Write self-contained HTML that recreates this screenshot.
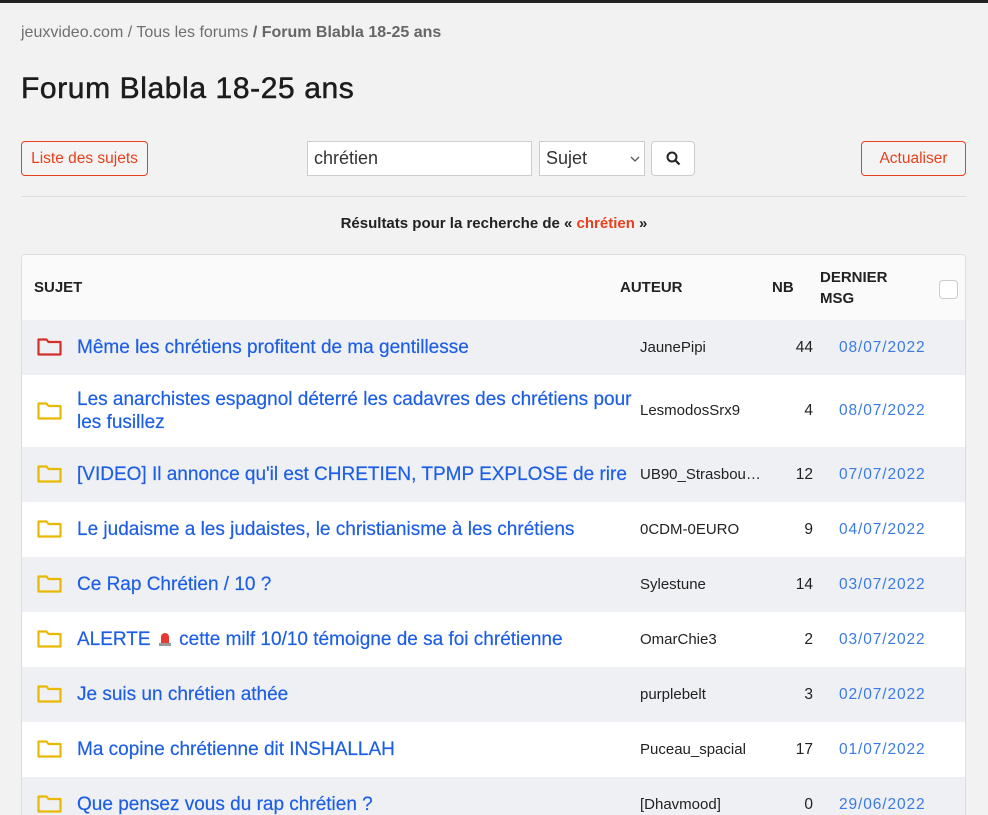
<!DOCTYPE html>
<html><head><meta charset="utf-8"><style>
*{box-sizing:border-box;margin:0;padding:0}
html,body{width:988px;height:815px;overflow:hidden}
body{background:#f2f2f2;font-family:"Liberation Sans",sans-serif;color:#222;position:relative}
.bar{position:absolute;left:0;top:0;width:988px;height:3px;background:#222}
.abs{position:absolute}
.bc{left:21px;top:24px;font-size:16px;color:#6f6f6f}
.bc b{color:#666}
h1{position:absolute;left:21px;top:72px;font-size:30px;font-weight:normal;color:#1c1c1c;letter-spacing:0.6px;-webkit-text-stroke:0.5px #1c1c1c}
.btn{position:absolute;border:1px solid #e8401c;border-radius:4px;color:#e8401c;background:#f4f4f4;font-size:15.5px;text-align:center;line-height:33px;height:35px}
.inp{position:absolute;background:#fff;border:1px solid #ccc;height:35px;font-size:18px;line-height:33px;padding-left:6px;color:#333}
.hr{left:21px;top:196px;width:945px;height:1px;background:#ddd}
.res{left:0;width:988px;top:215px;text-align:center;font-size:15px;font-weight:bold;color:#222}
.res span{color:#e8401c}
.tbl{position:absolute;left:21px;top:254px;width:945px;height:600px;border:1px solid #ddd;border-radius:4px;background:#fff;overflow:hidden}
.hd{position:absolute;left:0;top:0;width:945px;height:65px;background:#fafafa;font-weight:bold;font-size:15px;color:#222}
.row{position:absolute;left:0;width:945px}
.row.g{background:#eef0f4}
.t{position:absolute;left:55px;font-size:19px;color:#1d5ee6;line-height:23px;width:560px;-webkit-text-stroke:0.2px #1d5ee6}
.a{position:absolute;left:618px;font-size:15px;color:#222}
.n{position:absolute;right:154px;font-size:15.5px;color:#222;text-align:right}
.d{position:absolute;left:817px;font-size:15.5px;color:#3a7ae6;letter-spacing:0.9px}
.f{position:absolute;left:15px;width:25px;height:18px}
</style></head><body>
<div class="bar"></div>
<div class="abs bc">jeuxvideo.com / Tous les forums <b>/ Forum Blabla 18-25 ans</b></div>
<h1>Forum Blabla 18-25 ans</h1>
<div class="btn" style="left:21px;top:141px;width:127px">Liste des sujets</div>
<div class="inp" style="left:307px;top:141px;width:225px">chrétien</div>
<div class="inp" style="left:539px;top:141px;width:106px;border-color:#ccc">Sujet<svg style="position:absolute;right:4px;top:14px" width="10" height="6"><path d="M1 1l4 4 4-4" stroke="#555" fill="none" stroke-width="1.3"/></svg></div>
<div class="inp" style="left:651px;top:141px;width:44px;border-radius:4px"><svg style="position:absolute;left:14px;top:9px" width="15" height="15"><circle cx="6" cy="6" r="4.5" stroke="#222" stroke-width="2" fill="none"/><path d="M9.5 9.5l4 4" stroke="#222" stroke-width="2.2"/></svg></div>
<div class="btn" style="left:861px;top:141px;width:105px">Actualiser</div>
<div class="abs hr"></div>
<div class="abs res">Résultats pour la recherche de « <span>chrétien</span> »</div>
<div class="tbl">
<div class="hd">
<div class="abs" style="left:12px;top:24px">SUJET</div>
<div class="abs" style="left:598px;top:24px">AUTEUR</div>
<div class="abs" style="left:750px;top:24px">NB</div>
<div class="abs" style="left:798px;top:12px;line-height:21px">DERNIER<br>MSG</div>
<div class="abs" style="left:917px;top:25px;width:19px;height:19px;border:1px solid #ccc;border-radius:4px;background:#fff"></div>
</div>
<div class="row g" style="top:65px;height:55px"><svg class="f" style="top:18px" viewBox="0 0 25 18"><path d="M1.5 1.5h8l2 2.5h12v12.5h-22z" fill="none" stroke="#d3302a" stroke-width="2.2" stroke-linejoin="round"/></svg><div class="t" style="top:16px">Même les chrétiens profitent de ma gentillesse</div><div class="a" style="top:19px">JaunePipi</div><div class="n" style="top:19px">44</div><div class="d" style="top:19px">08/07/2022</div></div>
<div class="row" style="top:120px;height:72px"><svg class="f" style="top:27px" viewBox="0 0 25 18"><path d="M1.5 1.5h8l2 2.5h12v12.5h-22z" fill="none" stroke="#e9b800" stroke-width="2.2" stroke-linejoin="round"/></svg><div class="t" style="top:13px">Les anarchistes espagnol déterré les cadavres des chrétiens pour les fusillez</div><div class="a" style="top:27px">LesmodosSrx9</div><div class="n" style="top:27px">4</div><div class="d" style="top:27px">08/07/2022</div></div>
<div class="row g" style="top:192px;height:55px"><svg class="f" style="top:18px" viewBox="0 0 25 18"><path d="M1.5 1.5h8l2 2.5h12v12.5h-22z" fill="none" stroke="#e9b800" stroke-width="2.2" stroke-linejoin="round"/></svg><div class="t" style="top:16px">[VIDEO] Il annonce qu'il est CHRETIEN, TPMP EXPLOSE de rire</div><div class="a" style="top:19px">UB90_Strasbou…</div><div class="n" style="top:19px">12</div><div class="d" style="top:19px">07/07/2022</div></div>
<div class="row" style="top:247px;height:55px"><svg class="f" style="top:18px" viewBox="0 0 25 18"><path d="M1.5 1.5h8l2 2.5h12v12.5h-22z" fill="none" stroke="#e9b800" stroke-width="2.2" stroke-linejoin="round"/></svg><div class="t" style="top:16px">Le judaisme a les judaistes, le christianisme à les chrétiens</div><div class="a" style="top:19px">0CDM-0EURO</div><div class="n" style="top:19px">9</div><div class="d" style="top:19px">04/07/2022</div></div>
<div class="row g" style="top:302px;height:55px"><svg class="f" style="top:18px" viewBox="0 0 25 18"><path d="M1.5 1.5h8l2 2.5h12v12.5h-22z" fill="none" stroke="#e9b800" stroke-width="2.2" stroke-linejoin="round"/></svg><div class="t" style="top:16px">Ce Rap Chrétien / 10 ?</div><div class="a" style="top:19px">Sylestune</div><div class="n" style="top:19px">14</div><div class="d" style="top:19px">03/07/2022</div></div>
<div class="row" style="top:357px;height:55px"><svg class="f" style="top:18px" viewBox="0 0 25 18"><path d="M1.5 1.5h8l2 2.5h12v12.5h-22z" fill="none" stroke="#e9b800" stroke-width="2.2" stroke-linejoin="round"/></svg><div class="t" style="top:16px">ALERTE <svg width="18" height="18" style="vertical-align:-2px"><path d="M5 14v-6a4 4 0 0 1 8 0v6z" fill="#e53935"/><rect x="3" y="14" width="12" height="3" fill="#999"/></svg> cette milf 10/10 témoigne de sa foi chrétienne</div><div class="a" style="top:19px">OmarChie3</div><div class="n" style="top:19px">2</div><div class="d" style="top:19px">03/07/2022</div></div>
<div class="row g" style="top:412px;height:55px"><svg class="f" style="top:18px" viewBox="0 0 25 18"><path d="M1.5 1.5h8l2 2.5h12v12.5h-22z" fill="none" stroke="#e9b800" stroke-width="2.2" stroke-linejoin="round"/></svg><div class="t" style="top:16px">Je suis un chrétien athée</div><div class="a" style="top:19px">purplebelt</div><div class="n" style="top:19px">3</div><div class="d" style="top:19px">02/07/2022</div></div>
<div class="row" style="top:467px;height:55px"><svg class="f" style="top:18px" viewBox="0 0 25 18"><path d="M1.5 1.5h8l2 2.5h12v12.5h-22z" fill="none" stroke="#e9b800" stroke-width="2.2" stroke-linejoin="round"/></svg><div class="t" style="top:16px">Ma copine chrétienne dit INSHALLAH</div><div class="a" style="top:19px">Puceau_spacial</div><div class="n" style="top:19px">17</div><div class="d" style="top:19px">01/07/2022</div></div>
<div class="row g" style="top:522px;height:55px"><svg class="f" style="top:18px" viewBox="0 0 25 18"><path d="M1.5 1.5h8l2 2.5h12v12.5h-22z" fill="none" stroke="#e9b800" stroke-width="2.2" stroke-linejoin="round"/></svg><div class="t" style="top:16px">Que pensez vous du rap chrétien ?</div><div class="a" style="top:19px">[Dhavmood]</div><div class="n" style="top:19px">0</div><div class="d" style="top:19px">29/06/2022</div></div>
</div>
</body></html>
